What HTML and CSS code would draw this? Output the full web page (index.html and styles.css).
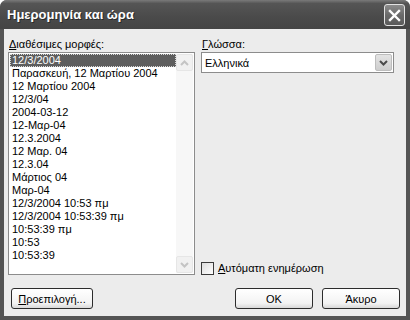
FILE: index.html
```html
<!DOCTYPE html>
<html lang="el">
<head>
    <meta charset="UTF-8">
    <title>Ημερομηνία και ώρα</title>
    <link rel="stylesheet" href="styles.css">
</head>
<body>
    <div class="window">
        <div class="titlebar">
            <span class="title">Ημερομηνία και ώρα</span>
            <span class="close">
                <svg width="13" height="13" viewBox="0 0 13 13"><path d="M2 2 L11 11 M11 2 L2 11" stroke="#fff" stroke-width="2.4" stroke-linecap="square"/></svg>
            </span>
        </div>
        <div class="client">
            <div class="panes">
                <div class="pane-left">
                    <div class="label"><u>Δ</u>ιαθέσιμες μορφές:</div>
                    <div class="listbox">
                        <ul class="items">
                            <li class="selected">12/3/2004</li>
                            <li>Παρασκευή, 12 Μαρτίου 2004</li>
                            <li>12 Μαρτίου 2004</li>
                            <li>12/3/04</li>
                            <li>2004-03-12</li>
                            <li>12-Μαρ-04</li>
                            <li>12.3.2004</li>
                            <li>12 Μαρ. 04</li>
                            <li>12.3.04</li>
                            <li>Μάρτιος 04</li>
                            <li>Μαρ-04</li>
                            <li>12/3/2004 10:53 πμ</li>
                            <li>12/3/2004 10:53:39 πμ</li>
                            <li>10:53:39 πμ</li>
                            <li>10:53</li>
                            <li>10:53:39</li>
                        </ul>
                        <div class="scrollbar">
                            <div class="sb-btn">
                                <svg width="9" height="6" viewBox="0 0 9 6"><path d="M1 5 L4.5 1.5 L8 5" fill="none" stroke="#c4c4c4" stroke-width="2"/></svg>
                            </div>
                            <div class="sb-track"></div>
                            <div class="sb-btn">
                                <svg width="9" height="6" viewBox="0 0 9 6"><path d="M1 1 L4.5 4.5 L8 1" fill="none" stroke="#c4c4c4" stroke-width="2"/></svg>
                            </div>
                        </div>
                    </div>
                </div>
                <div class="pane-right">
                    <div class="label"><u>Γ</u>λώσσα:</div>
                    <div class="combo">
                        <span class="combo-text">Ελληνικά</span>
                        <span class="combo-btn">
                            <svg width="9" height="6" viewBox="0 0 9 6"><path d="M1 1 L4.5 4.5 L8 1" fill="none" stroke="#4a4a4a" stroke-width="2"/></svg>
                        </span>
                    </div>
                    <div class="check">
                        <span class="box"></span>
                        <span><u>Α</u>υτόματη ενημέρωση</span>
                    </div>
                </div>
            </div>
            <div class="buttons">
                <span class="btn btn-wide"><u>Π</u>ροεπιλογή...</span>
                <span class="spacer"></span>
                <span class="btn btn-ok">OK</span>
                <span class="btn btn-cancel">Άκυρο</span>
            </div>
        </div>
    </div>
</body>
</html>
```

FILE: styles.css
```css
body {
    margin: 0;
    background-color: #fff;
    font-family: 'Liberation Sans', Arial, sans-serif;
    font-size: 11px;
    color: #000;
}
.window {
    width: 410px;
    height: 320px;
    display: flex;
    flex-direction: column;
    background-color: #545454;
    border-radius: 7px 7px 0 0;
    overflow: hidden;
}
.titlebar {
    height: 29px;
    flex: none;
    display: flex;
    align-items: center;
    justify-content: space-between;
    padding: 0 5px 0 7px;
    background: linear-gradient(#7a7a7a, #555 12%, #4a4a4a 60%, #444);
}
.title {
    color: #fff;
    font-weight: bold;
    font-size: 13px;
    text-shadow: 1px 1px 0 #2a2a2a;
}
.close {
    width: 19px;
    height: 20px;
    display: flex;
    align-items: center;
    justify-content: center;
    border: 1px solid #e2e2e2;
    border-radius: 3px;
    background: linear-gradient(#8c8c8c, #6a6a6a 50%, #5a5a5a);
    margin-top: 1px;
}
.client {
    flex: 1;
    margin: 0 4px 4px;
    padding: 8px 6px 7px 4px;
    background-color: #ececec;
    display: flex;
    flex-direction: column;
}
.panes {
    display: flex;
    gap: 6px;
    height: 238px;
    padding-right: 6px;
}
.pane-left {
    width: 187px;
    display: flex;
    flex-direction: column;
}
.pane-right {
    width: 193px;
    display: flex;
    flex-direction: column;
}
.label {
    height: 15px;
    line-height: 14px;
    padding-left: 1px;
}
.listbox {
    height: 223px;
    box-sizing: border-box;
    border: 1px solid #8c8c8c;
    background-color: #fff;
    padding: 1px;
    display: flex;
}
.items {
    flex: 1;
    list-style: none;
    margin: 0;
    padding: 0;
}
.items li {
    height: 13px;
    line-height: 13px;
    padding: 0 2px;
    white-space: nowrap;
}
.items li.selected {
    background-color: #5e5e5e;
    color: #fff;
    outline: 1px dotted #d8d8d8;
    outline-offset: -1px;
}
.scrollbar {
    width: 17px;
    display: flex;
    flex-direction: column;
    background-color: #f7f7f7;
}
.sb-btn {
    height: 15px;
    display: flex;
    align-items: center;
    justify-content: center;
    border: 1px solid #e6e6e6;
    border-radius: 2px;
    background-color: #f1f1f1;
}
.sb-track {
    flex: 1;
}
.combo {
    height: 21px;
    box-sizing: border-box;
    border: 1px solid #8c8c8c;
    background-color: #fff;
    display: flex;
    align-items: center;
    justify-content: space-between;
    padding: 0 1px 0 3px;
}
.combo-btn {
    width: 15px;
    height: 15px;
    display: flex;
    align-items: center;
    justify-content: center;
    border: 1px solid #bdbdbd;
    border-radius: 2px;
    background: linear-gradient(#e4e4e4, #cdcdcd);
}
.check {
    margin-top: auto;
    display: flex;
    align-items: center;
    gap: 4px;
    height: 14px;
}
.box {
    width: 11px;
    height: 11px;
    border: 1px solid #3a3a3a;
    background: linear-gradient(135deg, #dcdcdc, #fff);
}
.buttons {
    display: flex;
    margin-top: 13px;
    gap: 9px;
}
.spacer {
    flex: 1;
}
.btn {
    height: 21px;
    box-sizing: border-box;
    display: flex;
    align-items: center;
    justify-content: center;
    border: 1px solid #2c2c2c;
    border-radius: 3px;
    background: linear-gradient(#fff, #f3f3f3 75%, #d8d8d8);
}
.btn-wide {
    width: 82px;
    margin-left: 3px;
}
.btn-ok {
    width: 78px;
}
.btn-cancel {
    width: 78px;
}
```
